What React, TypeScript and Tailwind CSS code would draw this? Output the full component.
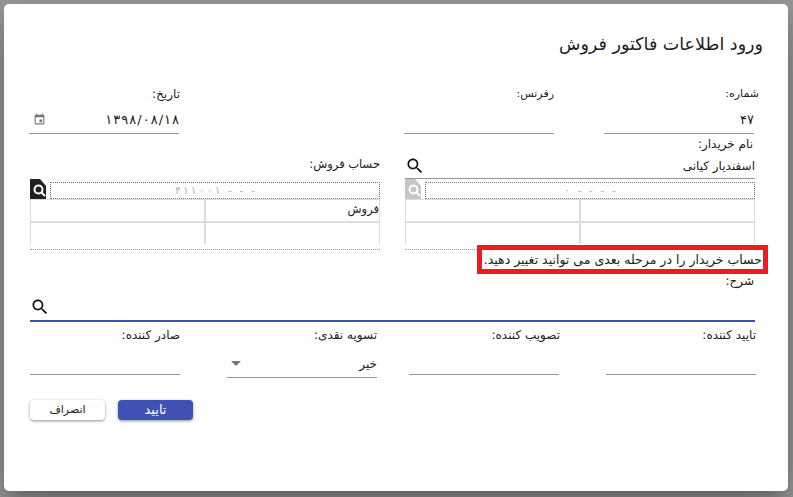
import React from "react";

const SEARCH_PATH =
  "M15.5 14h-.79l-.28-.27C15.41 12.59 16 11.11 16 9.5 16 5.91 13.09 3 9.5 3S3 5.91 3 9.5 5.91 16 9.5 16c1.61 0 3.09-.59 4.23-1.57l.27.28v.79l5 4.99L20.49 19l-4.99-5zm-6 0C7.01 14 5 11.99 5 9.5S7.01 5 9.5 5 14 7.01 14 9.5 11.99 14 9.5 14z";
const EVENT_PATH =
  "M17 12h-5v5h5v-5zM16 1v2H8V1H6v2H5c-1.11 0-1.99.9-1.99 2L3 19c0 1.1.89 2 2 2h14c1.1 0 2-.9 2-2V5c0-1.1-.9-2-2-2h-1V1h-2zm3 18H5V8h14v11z";

const SearchIcon = ({ className }: { className?: string }) => (
  <svg viewBox="0 0 24 24" className={className} fill="currentColor">
    <path d={SEARCH_PATH} />
  </svg>
);

// little tab with the cut corner that sits next to the account code
const SearchTab = ({ fill }: { fill: string }) => (
  <svg viewBox="0 0 16 20" className="w-[16px] h-[20px] shrink-0">
    <path d="M0 0H10L16 7V20H0Z" fill={fill} />
    <circle cx="8.5" cy="10.5" r="4" fill="none" stroke="#fff" strokeWidth="2" />
    <path d="M11.5 13.5L15 17" stroke="#fff" strokeWidth="2" />
  </svg>
);

// letter-spacing is ignored on these digits, so each char gets its own box
const SpacedText = ({ text, className }: { text: string; className: string }) => (
  <span dir="ltr" className={`inline-flex whitespace-pre ${className}`}>
    {text.split("").map((ch, i) => (
      <span key={i}>{ch}</span>
    ))}
  </span>
);

type FieldProps = {
  label: string;
  value?: React.ReactNode;
  labelClass?: string;
  left?: React.ReactNode;
};

const Field = ({ label, value, labelClass = "text-[12px]", left }: FieldProps) => (
  <div className="w-[150px] shrink-0">
    <div className={`h-[20px] leading-[20px] whitespace-nowrap ${labelClass}`}>{label}</div>
    <div className="h-[27px] mt-[3px] flex items-center justify-between border-b border-[#949494] pb-[1px]">
      <span>{value}</span>
      {left}
    </div>
  </div>
);

const AccountBox = ({ code, label, tab }: { code: string; label?: string; tab: string }) => (
  <div className="w-[350px]">
    <div className="flex flex-row-reverse items-end gap-[4px] h-[20px]">
      <SearchTab fill={tab} />
      <div className="flex-1 h-[17px] border border-dotted border-[#777] flex justify-center text-[11px] leading-[15px] text-[#b5b5b5]">
        <SpacedText text={code} className="gap-[2px]" />
      </div>
    </div>
    <div className="grid grid-cols-2 border border-[#dcdcdc] h-[45px] bg-[#dcdcdc] gap-[2px]">
      <div className="bg-white h-[21px] leading-[19px] text-[11.5px]">{label}</div>
      <div className="bg-white h-[21px]" />
      <div className="bg-white h-[21px]" />
      <div className="bg-white h-[21px]" />
    </div>
    <div className="mt-[5px] border-t border-dotted border-[#999]" />
  </div>
);

export default function App() {
  return (
    <div className="w-[793px] h-[497px] overflow-hidden bg-[#999999] pt-[4px] pl-[4px]">
      <div
        dir="rtl"
        className="relative w-[784px] h-[487px] bg-white rounded-[5px] pl-[26px] pr-[33px] text-[13px] text-[#212121] shadow-[0_11px_15px_-7px_rgba(0,0,0,0.2),0_24px_38px_3px_rgba(0,0,0,0.14),0_9px_46px_8px_rgba(0,0,0,0.12)]"
        style={{ fontFamily: '"DejaVu Sans", "Noto Sans", sans-serif' }}
      >
        <div className="-mr-[8px] pt-[26px] h-[80px] text-[17.5px] leading-[28px]">ورود اطلاعات فاکتور فروش</div>

        <div className="flex gap-[50px] pr-[1px]">
          <Field label="شماره:" value="۴۷" labelClass="text-[11px] -mr-[5px]" />
          <Field label="رفرنس:" labelClass="text-[11px]" />
          <div className="mr-auto -ml-px">
            <Field
              label="تاریخ:"
              value={<SpacedText text="۱۳۹۸/۰۸/۱۸" className="gap-[1px]" />}
              labelClass="text-[12px] -mr-px"
              left={
                <svg viewBox="0 0 24 24" className="w-[13px] h-[13px] ml-[4px]" fill="#757575">
                  <path d={EVENT_PATH} />
                </svg>
              }
            />
          </div>
        </div>

        <div className="flex justify-between h-[49px]">
          <div className="w-[350px]">
            <div className="h-[20px] leading-[20px] text-[12px] pr-[2px]">نام خریدار:</div>
            <div className="h-[25px] flex items-center justify-between border-b border-[#949494] text-[12px]">
              <span>اسفندیار کیانی</span>
              <SearchIcon className="w-[20px] h-[20px] text-[#111]" />
            </div>
          </div>
          <div className="w-[350px] pt-[20px]">
            <div className="h-[20px] leading-[20px] text-[11.5px]">حساب فروش:</div>
          </div>
        </div>

        <div className="flex justify-between h-[91px] -mt-[4px] relative">
          <AccountBox code="۰ - - - -" tab="#c6c6c6" />
          <AccountBox code="۴۱۱۰۰۱ - - -" label="فروش" tab="#212121" />
          {/* red note drawn over the form */}
          <div className="absolute top-[66px] -right-[13px] w-[291px] h-[29px] border-[5px] border-[#ed1c24] bg-white text-[12.5px] leading-[19px] pr-[1px] whitespace-nowrap">
            حساب خریدار را در مرحله بعدی می توانید تغییر دهید.
          </div>
        </div>

        <div className="h-[20px] leading-[20px] text-[12px] pr-[1px] mt-[1px]">شرح:</div>
        <div className="h-[32px] flex items-center justify-between border-b-2 border-[#3f51b5] mt-[-1px]">
          <span />
          <SearchIcon className="w-[20px] h-[20px] text-[#111] mt-[4px]" />
        </div>

        <div className="flex justify-between -mr-[1px] mt-[3px]">
          <Field label="تایید کننده:" labelClass="text-[12px] mb-px" />
          <div className="w-[150px] mr-[47px]">
            <Field label="تصویب کننده:" labelClass="text-[12px] mb-px -mr-px" />
          </div>
          <div className="w-[150px] mr-[32px]">
            <div className="h-[20px] leading-[20px] text-[12px]">تسویه نقدی:</div>
            <div className="h-[30px] mt-[3px] flex items-center justify-between border-b border-[#949494] text-[12px]">
              <span className="pt-[3px]">خیر</span>
              <span className="w-0 h-0 border-x-[5px] border-x-transparent border-t-[5px] border-t-[#757575] ml-[4px] mt-[2px]" />
            </div>
          </div>
          <div className="w-[150px] mr-[47px]">
            <Field label="صادر کننده:" labelClass="text-[12px] mb-px" />
          </div>
        </div>

        <div className="flex flex-row-reverse gap-[13px] mt-[22px]">
          <button className="w-[75px] h-[20px] rounded-[4px] bg-white text-[11px] leading-[20px] shadow-[0_1px_3px_rgba(0,0,0,0.45)]">
            انصراف
          </button>
          <button className="w-[75px] h-[20px] rounded-[4px] bg-[#3f51b5] text-white text-[13px] leading-[20px] shadow-[0_1px_3px_rgba(0,0,0,0.45)]">
            تایید
          </button>
        </div>
      </div>
    </div>
  );
}
